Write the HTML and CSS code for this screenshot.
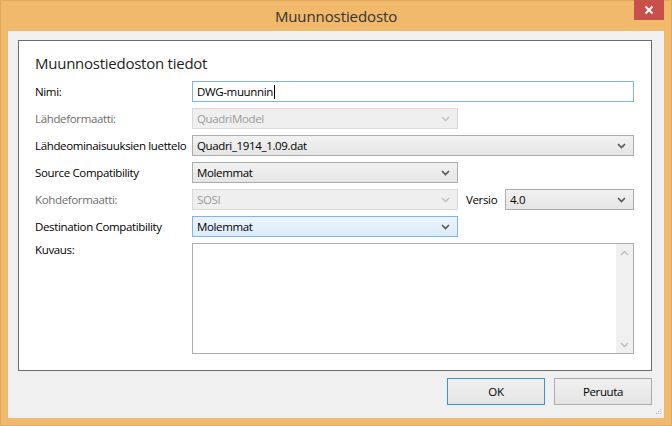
FILE: index.html
```html
<!DOCTYPE html>
<html>
<head>
<meta charset="utf-8">
<link rel="stylesheet" href="styles.css">
</head>
<body>
<div class="window">
  <div class="titlebar">
    <span></span>
    <span class="title">Muunnostiedosto</span>
    <span class="close"><svg width="10" height="10" viewBox="0 0 10 10"><path d="M1.5 1.5 L8.5 8.5 M8.5 1.5 L1.5 8.5" stroke="#fff" stroke-width="1.8" fill="none"/></svg></span>
  </div>
  <div class="client">
    <div class="panel">
      <div class="heading">Muunnostiedoston tiedot</div>
      <div class="row">
        <label class="lbl">Nimi:</label>
        <div class="input full">DWG-muunnin<span class="caret"></span></div>
      </div>
      <div class="row">
        <label class="lbl disabled">Lähdeformaatti:</label>
        <div class="select short is-disabled"><span>QuadriModel</span><svg class="arrow" width="9" height="6" viewBox="0 0 9 6"><path d="M1 1 L4.5 4.5 L8 1" stroke="currentColor" stroke-width="1.6" fill="none"/></svg></div>
      </div>
      <div class="row">
        <label class="lbl">Lähdeominaisuuksien luettelo</label>
        <div class="select full"><span>Quadri_1914_1.09.dat</span><svg class="arrow" width="9" height="6" viewBox="0 0 9 6"><path d="M1 1 L4.5 4.5 L8 1" stroke="currentColor" stroke-width="1.6" fill="none"/></svg></div>
      </div>
      <div class="row">
        <label class="lbl">Source Compatibility</label>
        <div class="select short"><span>Molemmat</span><svg class="arrow" width="9" height="6" viewBox="0 0 9 6"><path d="M1 1 L4.5 4.5 L8 1" stroke="currentColor" stroke-width="1.6" fill="none"/></svg></div>
      </div>
      <div class="row">
        <label class="lbl disabled">Kohdeformaatti:</label>
        <div class="select short is-disabled"><span>SOSI</span><svg class="arrow" width="9" height="6" viewBox="0 0 9 6"><path d="M1 1 L4.5 4.5 L8 1" stroke="currentColor" stroke-width="1.6" fill="none"/></svg></div>
        <label class="versio">Versio</label>
        <div class="select version"><span>4.0</span><svg class="arrow" width="9" height="6" viewBox="0 0 9 6"><path d="M1 1 L4.5 4.5 L8 1" stroke="currentColor" stroke-width="1.6" fill="none"/></svg></div>
      </div>
      <div class="row">
        <label class="lbl">Destination Compatibility</label>
        <div class="select short is-focused"><span>Molemmat</span><svg class="arrow" width="9" height="6" viewBox="0 0 9 6"><path d="M1 1 L4.5 4.5 L8 1" stroke="currentColor" stroke-width="1.6" fill="none"/></svg></div>
      </div>
      <div class="row top">
        <label class="lbl">Kuvaus:</label>
        <div class="textarea full">
          <div class="text"></div>
          <div class="scrollbar">
            <svg width="9" height="6" viewBox="0 0 9 6"><path d="M1 5 L4.5 1.5 L8 5" stroke="currentColor" stroke-width="1.4" fill="none"/></svg>
            <svg width="9" height="6" viewBox="0 0 9 6"><path d="M1 1 L4.5 4.5 L8 1" stroke="currentColor" stroke-width="1.4" fill="none"/></svg>
          </div>
        </div>
      </div>
    </div>
    <div class="footer">
      <button class="btn default">OK</button>
      <button class="btn">Peruuta</button>
    </div>
    <div class="grip"><svg width="7" height="7" viewBox="0 0 7 7" fill="#b8b8b8"><rect x="5" y="1" width="1" height="1"/><rect x="3" y="3" width="1" height="1"/><rect x="5" y="3" width="1" height="1"/><rect x="1" y="5" width="1" height="1"/><rect x="3" y="5" width="1" height="1"/><rect x="5" y="5" width="1" height="1"/></svg></div>
  </div>
</div>
</body>
</html>
```
FILE: styles.css
```css
* { box-sizing: border-box; }
html, body { margin: 0; padding: 0; }
body {
  width: 672px;
  height: 426px;
  overflow: hidden;
  font-family: "Segoe UI", "Open Sans", "Noto Sans", sans-serif;
  font-size: 11.5px;
  letter-spacing: -0.35px;
  color: #000;
}
.window {
  width: 672px;
  height: 426px;
  background: #f1b96b;
  border: 1px solid #e0a85a;
  display: flex;
  flex-direction: column;
  padding: 0 7px 7px 7px;
}
.titlebar {
  height: 30px;
  display: grid;
  grid-template-columns: 1fr auto 1fr;
  align-items: start;
}
.title {
  font-size: 15px;
  letter-spacing: -0.1px;
  color: #333;
  line-height: 30px;
}
.close {
  justify-self: end;
  width: 30px;
  height: 20px;
  margin-top: -1px;
  background: #c8504b;
  display: flex;
  align-items: center;
  justify-content: center;
}
.client {
  flex: 1;
  background: #f0f0f0;
  padding: 9px 12px 0 10px;
  display: flex;
  flex-direction: column;
}
.panel {
  height: 331px;
  background: #fff;
  border: 1px solid #6b6b6b;
  padding: 12px 17px 0 16px;
  display: flex;
  flex-direction: column;
  gap: 6px;
}
.heading {
  font-size: 15px;
  letter-spacing: -0.25px;
  line-height: 20px;
  color: #1e1e1e;
  margin-bottom: 2px;
}
.row {
  display: flex;
  align-items: center;
  height: 21px;
}
.row.top {
  align-items: flex-start;
  height: 111px;
}
.lbl {
  width: 157px;
  flex: none;
  white-space: nowrap;
  color: #000;
}
.row.top .lbl { margin-top: -1px; }
.lbl.disabled { color: #6d6d6d; }
.versio {
  margin-left: 8px;
  width: 39px;
}
.full { width: 442px; }
.short { width: 266px; }
.version { width: 129px; }
.input {
  height: 21px;
  border: 1px solid #7eb4ea;
  background: #fff;
  padding: 0 4px;
  line-height: 19px;
  display: flex;
  align-items: center;
}
.caret {
  display: inline-block;
  width: 1px;
  height: 14px;
  background: #000;
  margin-left: 1px;
}
.select {
  height: 21px;
  border: 1px solid #acacac;
  background: linear-gradient(#f2f2f2, #e5e5e5);
  padding: 0 7px 0 4px;
  display: flex;
  align-items: center;
  justify-content: space-between;
  color: #000;
}
.select .arrow { color: #555; }
.select.is-disabled {
  background: #efefef;
  border-color: #d9d9d9;
  color: #9a9a9a;
}
.select.is-disabled .arrow { color: #c4c4c4; }
.select.is-focused {
  background: linear-gradient(#ecf4fc, #dcecfc);
  border-color: #7eb4ea;
}
.textarea {
  height: 111px;
  border: 1px solid #acacac;
  background: #fff;
  display: flex;
}
.textarea .text { flex: 1; }
.scrollbar {
  width: 17px;
  background: #f0f0f0;
  display: flex;
  flex-direction: column;
  justify-content: space-between;
  align-items: center;
  padding: 6px 0 5px;
  color: #bdbdbd;
}
.footer {
  display: flex;
  justify-content: flex-end;
  gap: 9px;
  padding-top: 7px;
}
.btn {
  width: 98px;
  height: 27px;
  font-family: inherit;
  font-size: 11.5px;
  letter-spacing: -0.35px;
  color: #000;
  border: 1px solid #acacac;
  background: linear-gradient(#f0f0f0, #e5e5e5);
  padding: 0;
}
.btn.default { border-color: #3c90d8; }
.grip {
  display: flex;
  justify-content: flex-end;
  margin-right: -10px;
  margin-top: 3px;
  height: 7px;
}
```
